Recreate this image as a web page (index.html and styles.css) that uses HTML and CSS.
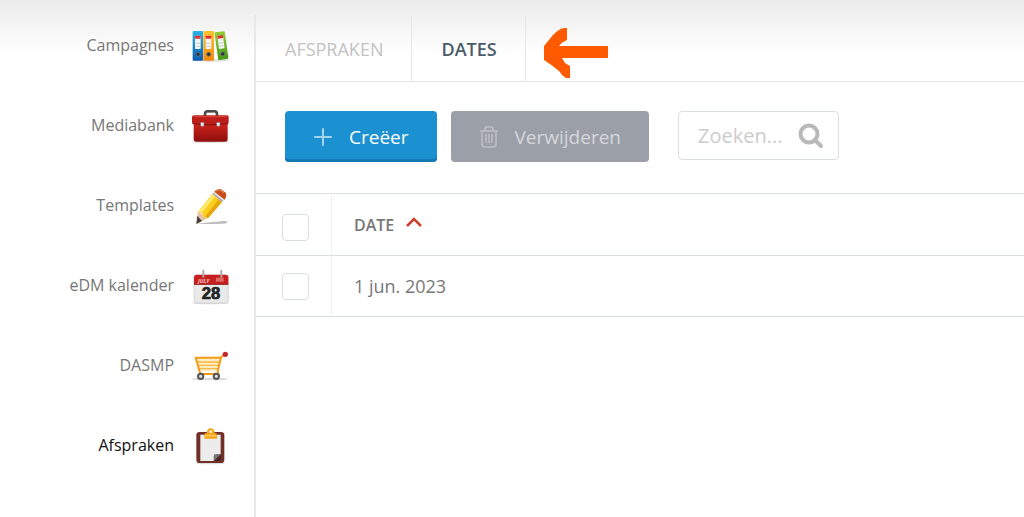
FILE: index.html
```html
<!DOCTYPE html>
<html lang="nl">
<head>
<meta charset="utf-8">
<meta name="viewport" content="width=device-width, initial-scale=1">
<title>Afspraken - Dates</title>
<link rel="stylesheet" href="styles.css">
</head>
<body>

<nav class="sidebar">
  <ul class="menu">
    <li><a href="#">Campagnes
      <svg class="menu-icon" viewBox="30 12 126 120" aria-hidden="true">
        <defs>
          <linearGradient id="blue" x2="0" y2="1"><stop offset="0" stop-color="#27b3ea"/><stop offset="1" stop-color="#0a5cae"/></linearGradient>
          <linearGradient id="orange" x2="0" y2="1"><stop offset="0" stop-color="#ffc22e"/><stop offset="1" stop-color="#f18a0b"/></linearGradient>
          <linearGradient id="green" x2="0" y2="1"><stop offset="0" stop-color="#8fce35"/><stop offset="1" stop-color="#459a16"/></linearGradient>
        </defs>
        <ellipse cx="92" cy="118" rx="56" ry="4" fill="#ddd"/>
        <rect x="38" y="30" width="31" height="89" rx="3" fill="url(#blue)"/>
        <rect x="70" y="30" width="32" height="89" rx="3" fill="url(#orange)"/>
        <g id="binder-label">
          <rect x="45" y="44" width="17" height="40" rx="2" fill="#f3f3f3"/>
          <rect x="45" y="44" width="17" height="9" rx="2" fill="#e3302b"/>
          <path d="M47 67h13M47 76h13" stroke="#bbb" stroke-width="2"/>
          <circle cx="54" cy="100" r="6" fill="#26333a" stroke="#777" stroke-width="2"/>
        </g>
        <use href="#binder-label" x="32"/>
        <g transform="rotate(-8 124 75)">
          <rect x="109" y="32" width="31" height="84" rx="3" fill="url(#green)"/>
          <use href="#binder-label" x="71" y="-1"/>
        </g>
      </svg></a></li>
    <li><a href="#">Mediabank
      <svg class="menu-icon" viewBox="30 12 126 120" aria-hidden="true">
        <defs><linearGradient id="red" x2="0" y2="1"><stop offset="0" stop-color="#d3261f"/><stop offset="1" stop-color="#8e0d0c"/></linearGradient></defs>
        <ellipse cx="92" cy="122" rx="56" ry="4" fill="#ddd"/>
        <path d="M75 48V39q0-8 8-8h20q8 0 8 8v9" fill="none" stroke="#4a4a4a" stroke-width="8"/>
        <path d="M80 35h26" stroke="#999" stroke-width="2"/>
        <path d="M41 65h102v49q0 8-8 8H49q-8 0-8-8z" fill="url(#red)"/>
        <path d="M43 43h98q5 0 5 6v13q0 8-8 8H44q-8 0-8-8V49q0-6 7-6z" fill="#bd1e19"/>
        <path d="M38 68q54 8 106 0" fill="none" stroke="#7c0d0b" stroke-width="3"/>
        <path d="M42 47h98" stroke="#dc4842" stroke-width="3"/>
        <g fill="#eee" stroke="#777" stroke-width="2"><rect x="62" y="64" width="10" height="12" rx="3"/><rect x="110" y="64" width="10" height="12" rx="3"/></g>
      </svg></a></li>
    <li><a href="#">Templates
      <svg class="menu-icon" viewBox="30 12 126 120" aria-hidden="true">
        <path d="M48 128l85-8q14 1 7 6-8 4-92 2z" fill="#bbb"/>
        <path d="M54 91l29 21-34 17z" fill="#e8c59f"/>
        <path d="M52 104l14 16-17 9z" fill="#444"/>
        <path d="M97 38l29 25-42 49-12-5-5-10-13-5z" fill="#fbce1d"/>
        <path d="M97 38l9 8-40 50-12-4z" fill="#ffe66c"/>
        <path d="M116 55l10 8-42 49-8-6z" fill="#e6a70c"/>
        <path d="M97 38l8-8 30 23-9 10z" fill="#e8e8e8"/>
        <path d="M97 38l3-3 30 24-4 4z" fill="#aaa"/>
        <path d="M103 32q10-11 20-7l14 10q5 8-3 21z" fill="#c94b16"/>
        <path d="M107 31q8-8 15-3l9 7" fill="none" stroke="#e58551" stroke-width="4"/>
      </svg></a></li>
    <li><a href="#">eDM kalender
      <svg class="menu-icon" viewBox="30 12 126 120" aria-hidden="true">
        <ellipse cx="92" cy="126" rx="56" ry="4" fill="#ddd"/>
        <rect x="42" y="42" width="103" height="84" rx="9" fill="#e9e9e9" stroke="#c9c9c9" stroke-width="2"/>
        <path d="M42 69V49q0-8 8-8h87q8 0 8 8v20z" fill="#c91f20"/>
        <path d="M42 70h103" stroke="#8d1413" stroke-width="3"/>
        <rect x="108" y="50" width="23" height="12" fill="#df6b68"/>
        <path d="M70 29v18M124 29v18" stroke="#aaa" stroke-width="6" stroke-linecap="round"/>
        <text class="cal-month" x="54" y="65">JULY</text>
        <text class="cal-day" x="93" y="113">28</text>
      </svg></a></li>
    <li><a href="#">DASMP
      <svg class="menu-icon" viewBox="30 5 126 120" aria-hidden="true">
        <ellipse cx="90" cy="107" rx="56" ry="4" fill="#ddd"/>
        <path d="M48 44h73l-7 39H59z" fill="#fff1cf"/>
        <path d="M53 56h65M55 66h61M57 76h58" stroke="#f5b13c" stroke-width="4"/>
        <path d="M64 45l5 38M78 45l3 38M93 45v38M107 45l-3 38" stroke="#ffd878" stroke-width="2"/>
        <path d="M133 34l-10 8-10 42 2 8H61L47 43h74" fill="none" stroke="#f49b13" stroke-width="6" stroke-linejoin="round" stroke-linecap="round"/>
        <circle cx="136" cy="33" r="8" fill="#c5282c"/>
        <g fill="#ddd" stroke="#555" stroke-width="6"><circle cx="62" cy="99" r="8"/><circle cx="109" cy="99" r="8"/></g>
      </svg></a></li>
    <li class="active"><a href="#">Afspraken
      <svg class="menu-icon" viewBox="30 5 126 120" aria-hidden="true">
        <ellipse cx="91" cy="119" rx="44" ry="4" fill="#ddd"/>
        <rect x="49" y="26" width="84" height="93" rx="10" fill="#713027"/>
        <path d="M61 34h61v60l-20 19H61z" fill="#ececec"/>
        <path d="M122 92l-21 21v-14q0-7 7-7z" fill="#777"/>
        <path d="M101 113l21-21v21z" fill="#4c2521"/>
        <path d="M73 46V34q0-5 7-5 1-14 12-14t12 14q7 0 7 5v12z" fill="#f5a51e"/>
        <path d="M76 37h32" stroke="#ffcf5b" stroke-width="4"/>
        <circle cx="92" cy="25" r="4" fill="#fff3d8"/>
      </svg></a></li>
  </ul>
</nav>

<main class="content">
  <nav class="tabs">
    <a class="tab" href="#">AFSPRAKEN</a>
    <a class="tab current" href="#">DATES</a>
    <svg class="pointer" viewBox="0 0 64 50" aria-hidden="true">
      <path d="M0 18L9 7Q16 0 20 0H23V12Q18 14 15 18H64V30H18L21 35L26 38V50H22Q18 48 15 43Q8 37 0 32Z" fill="#ff5a00"/>
    </svg>
  </nav>

  <div class="toolbar">
    <button class="btn btn-create" type="button">
      <svg class="btn-icon" viewBox="0 0 20 20" aria-hidden="true"><path d="M10 2v16M2 10h16" stroke="currentColor" stroke-width="2" stroke-linecap="round"/></svg>
      Creëer
    </button>
    <button class="btn btn-delete" type="button" disabled>
      <svg class="btn-icon" viewBox="0 0 20 22" aria-hidden="true"><path d="M1 5h18M6 5V3q0-2 2-2h4q2 0 2 2v2M3 5v13q0 3 3 3h8q3 0 3-3V5M7 8v9M10 8v9M13 8v9" fill="none" stroke="currentColor" stroke-width="1.500"/></svg>
      Verwijderen
    </button>
    <label class="search">
      <input type="text" placeholder="Zoeken..." aria-label="Zoeken">
      <svg class="search-icon" viewBox="0 0 26 26" aria-hidden="true"><circle cx="11" cy="11" r="8.500" fill="none" stroke="currentColor" stroke-width="4"/><path d="M17 17l6 6" stroke="currentColor" stroke-width="4" stroke-linecap="round"/></svg>
    </label>
  </div>

  <table class="dates">
    <thead>
      <tr>
        <th class="check"><input type="checkbox" aria-label="Alles selecteren"></th>
        <th>DATE <svg class="sort" viewBox="0 0 16 10" aria-hidden="true"><path d="M1 9l7-7 7 7" fill="none" stroke="#c9402a" stroke-width="2.500"/></svg></th>
      </tr>
    </thead>
    <tbody>
      <tr>
        <td class="check"><input type="checkbox" aria-label="1 jun. 2023 selecteren"></td>
        <td>1 jun. 2023</td>
      </tr>
    </tbody>
  </table>
</main>

</body>
</html>
```

FILE: styles.css
```css
* {
  box-sizing: border-box;
}

body {
  display: flex;
  min-height: 100vh;
  margin: 0;
  padding-top: 15px;
  font-family: "Open Sans", "Noto Sans", sans-serif;
  font-size: 16px;
  color: #777;
  background: #fff linear-gradient(#ebebeb, #fff 54px) no-repeat;
}

a {
  color: inherit;
  text-decoration: none;
}

.sidebar {
  flex: 0 0 256px;
  padding: 0 22px 0 0;
  border-right: 2px solid #e6e8e9;
}

.menu {
  display: grid;
  gap: 40px;
  margin: 0;
  padding: 10px 0 0;
  list-style: none;
}

.menu a {
  display: flex;
  align-items: center;
  justify-content: flex-end;
  gap: 16px;
}

.menu .active {
  color: #111;
}

.menu-icon {
  width: 42px;
  height: 40px;
}

.cal-month {
  font: italic bold 16px "Open Sans", sans-serif;
  fill: #f6c9c7;
}

.cal-day {
  font: bold 50px "Liberation Sans", sans-serif;
  text-anchor: middle;
  fill: #222;
  stroke: #222;
  stroke-width: 2px;
}

.content {
  flex: 1;
  min-width: 0;
}

/* tabs */
.tabs {
  display: flex;
  align-items: center;
  height: 67px;
  border-bottom: 1px solid #e6e6e6;
}

.tab {
  display: flex;
  align-items: center;
  height: 100%;
  padding: 2px 28px 0 29px;
  border-right: 1px solid #e6e6e6;
  font-size: 18px;
  color: #c2c2c2;
}

.tab.current {
  font-weight: 600;
  color: #4a5b69;
}

.pointer {
  width: 64px;
  height: 50px;
  margin: 10px 0 0 18px;
}

/* toolbar */
.toolbar {
  display: flex;
  align-items: flex-start;
  padding: 29px 29px 31px;
}

.btn {
  display: flex;
  align-items: center;
  gap: 16px;
  height: 51px;
  padding: 0 28px;
  border: 0;
  border-radius: 4px;
  font-family: inherit;
  font-size: 19px;
  color: #fff;
}

.btn-create {
  margin-right: 14px;
  background: #1b91d1;
  box-shadow: inset 0 -3px #1579b4;
}

.btn-delete {
  margin-right: 29px;
  background: #9b9fa8;
  color: #d5d7da;
}

.btn-icon {
  width: 20px;
  height: 22px;
  opacity: 0.6;
}

.search {
  display: flex;
  align-items: center;
  width: 161px;
  height: 49px;
  padding: 0 14px 0 19px;
  border: 1px solid #d9dfe1;
  border-radius: 4px;
  background: #fff;
}

.search input {
  flex: 1;
  min-width: 0;
  padding: 0;
  border: 0;
  outline: 0;
  font: inherit;
  font-size: 20px;
  background: none;
}

.search input::placeholder {
  color: #ccc;
}

.search-icon {
  width: 26px;
  height: 26px;
  color: #b9b9b9;
}

/* table */
.dates {
  width: 100%;
  border-collapse: collapse;
  border-top: 1px solid #d9dfe1;
}

.dates th,
.dates td {
  height: 61px;
  padding: 0 22px;
  border-bottom: 1px solid #d9dfe1;
  text-align: left;
  font-size: 18px;
}

.dates th {
  height: 62px;
  font-size: 16px;
  font-weight: 600;
}

.dates .check {
  width: 75px;
  padding: 0 22px 0 26px;
  border-right: 1px solid #eef0f1;
}

.dates input {
  display: block;
  appearance: none;
  width: 27px;
  height: 27px;
  margin: 0;
  border: 1px solid #d9dfe1;
  border-radius: 4px;
  background: #fff;
}

.dates th input {
  margin-top: 6px;
}

.sort {
  width: 16px;
  height: 10px;
  margin-left: 8px;
  vertical-align: 4px;
}
```
